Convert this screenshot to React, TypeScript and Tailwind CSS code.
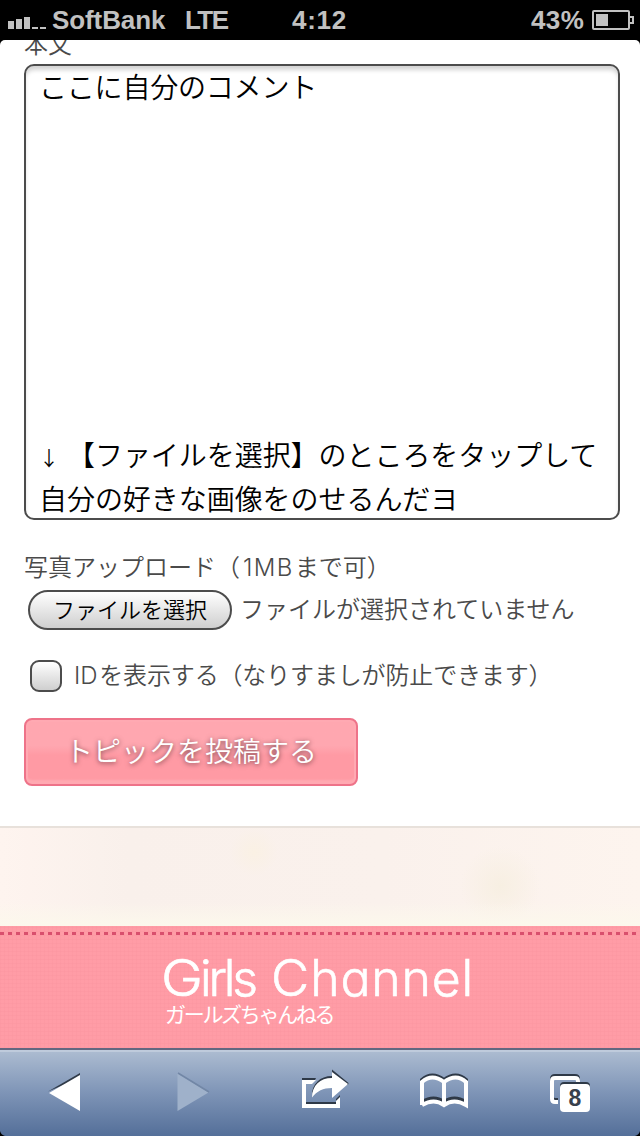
import React from "react";

const JP = "font-['Noto_Sans_CJK_JP',sans-serif]";

function StatusBar() {
  return (
    <header className="flex h-10 shrink-0 items-center bg-black pl-2 pr-1.5 font-['Liberation_Sans',sans-serif] text-[26px] font-bold leading-8 text-[#c1c1c1]">
      <svg width="40" height="20" viewBox="0 0 40 20" fill="#c1c1c1" className="shrink-0">
        <rect x="0" y="11" width="6" height="8" />
        <rect x="8" y="9" width="6" height="10" />
        <rect x="16" y="7" width="6" height="12" />
        <rect x="24" y="17" width="6" height="2" />
        <rect x="32" y="17" width="6" height="2" />
      </svg>
      <span className="ml-1 w-[133px] whitespace-nowrap tracking-[-0.1px]">SoftBank</span>
      <span className="w-[107px] whitespace-nowrap tracking-[-1.6px]">LTE</span>
      <span className="w-[239px] whitespace-nowrap tracking-[0.7px]">4:12</span>
      <span className="w-[61px] whitespace-nowrap tracking-[0.4px]">43%</span>
      <svg width="42" height="20" viewBox="0 0 42 20" fill="none" stroke="#c1c1c1" strokeWidth="2" className="shrink-0">
        <rect x="1" y="1" width="36" height="18" rx="1" />
        <path d="M38 7h3v6h-3" />
        <rect x="4" y="4" width="12" height="12" fill="#c1c1c1" stroke="none" />
      </svg>
    </header>
  );
}

function TopicForm() {
  return (
    <main className={`h-[786px] shrink-0 overflow-hidden rounded-t-[5px] bg-white px-6 font-[350] text-[#4a4a4a] ${JP}`}>
      <div className="-mt-[9px] h-[33px] text-2xl leading-6">本文</div>
      <div className="flex h-[456px] w-[596px] flex-col justify-between rounded-[10px] border-2 border-[#4c4c4c] bg-white pl-[13px] text-[28px] leading-[44px] text-black shadow-[inset_0_5px_4px_-1px_#d4d4d4]">
        <div className="-mt-[2px] whitespace-nowrap tracking-[-0.2px]">ここに自分のコメント</div>
        <div className="-mb-[2px] whitespace-nowrap tracking-[-0.05px]">
          <div className="flex h-11">
            <span className="w-7 shrink-0 pt-1 text-[20px]">↓</span>
            <span>【ファイルを選択】のところをタップして</span>
          </div>
          <div>自分の好きな画像をのせるんだヨ</div>
        </div>
      </div>
      <div className="mt-[34px] h-9 whitespace-nowrap text-2xl leading-6">
        写真アップロード（<span className="ml-[3px] mr-px font-['Inter',sans-serif] font-light tracking-[1.4px]">1MB</span>まで可）
      </div>
      <div className="flex h-10 items-center pl-1">
        <button className="flex h-10 w-[204px] items-start justify-center whitespace-nowrap rounded-full border-2 border-[#4c4c4c] bg-linear-to-b from-white to-[#cfcfcf] text-[22px] font-[350] leading-[33px] text-black">
          ファイルを選択
        </button>
        <span className="ml-2 whitespace-nowrap pb-1 text-2xl leading-8">ファイルが選択されていません</span>
      </div>
      <label className="mt-[30px] flex h-8 items-center pl-1.5">
        <span className="h-8 w-8 rounded-[9px] border-2 border-[#4c4c4c] bg-linear-to-b from-white to-[#cfcfcf]" />
        <span className="ml-3 whitespace-nowrap pb-0.5 text-2xl leading-8 tracking-[-0.15px]">
          <span className="mr-0.5 font-['Inter',sans-serif] font-light">ID</span>を表示する（なりすましが防止できます）
        </span>
      </label>
      <button className="mt-[26px] flex h-[68px] w-[334px] items-start justify-center whitespace-nowrap rounded-lg border-2 border-[#ee7389] bg-linear-to-b from-[#ffa7b0] from-40% to-[#ff9aa4] to-55% text-[28px] font-[350] leading-[60px] text-white shadow-[inset_0_0_0_2px_#ffa9b2,inset_0_-4px_2px_#ffaab2] [text-shadow:0_1px_5px_#704048]">
        トピックを投稿する
      </button>
    </main>
  );
}

function Brand() {
  return (
    <footer className="flex h-[122px] shrink-0 flex-col bg-[#ff9ca6] bg-[repeating-linear-gradient(0deg,#f58c9830_0_1px,transparent_1px_4px),repeating-linear-gradient(90deg,#f58c9828_0_1px,transparent_1px_4px)] pt-1.5 text-white">
      <div className="h-[3px] shrink-0 bg-[repeating-linear-gradient(90deg,#d94f6d_0_4px,transparent_4px_8px)]" />
      <div className="ml-[161px] mt-5 flex h-[46px] whitespace-nowrap font-['Inter',sans-serif] text-[50px] font-light leading-[46px] [-webkit-text-stroke:0.6px_white] [font-feature-settings:'cv11']">
        <span className="w-[110px] tracking-[-3.2px]">
          <span className="mr-[5px] inline-block origin-left scale-x-[1.13]">G</span>irls
        </span>
        <span className="tracking-[0.8px]">
          <span className="mr-0.5 inline-block origin-left scale-x-105">C</span>hannel
        </span>
      </div>
      <div className={`ml-[165px] whitespace-nowrap text-[21px] leading-6 tracking-[-2.3px] ${JP}`}>ガールズちゃんねる</div>
    </footer>
  );
}

function Toolbar() {
  return (
    <nav className="h-[88px] shrink-0 bg-linear-to-b from-[#b0bfd3] via-[#7f95b7] to-[#546f99]">
      <svg width="640" height="88" viewBox="0 0 640 88" fill="none">
        <path d="M0 0h640v2H0z" fill="#636780" />
        <path d="M0 2h640v2H0z" fill="#bfcbdc" />
        <path d="M48 43.500L80 25V30z" fill="#303a48" />
        <path d="M49 45L80 27v36z" fill="#fff" />
        <path d="M177.500 25.500L208.500 44.500 177.500 63z" fill="#9fb1ca" />
        <path d="M178 25L209 44" stroke="#7287a6" strokeWidth="1.500" />
        <g>
          <path d="M302 30h14l-1 2h-13zM306 54h30v2h-30zM336 51l4-4v3l-4 3z" fill="#2e3947" />
          <path d="M332 21.500L348.500 35l-.5 2-16-11zM332 28c-12 0-20 8-20 19v3c0-11 8-19 20-19z" fill="#2e3947" />
          <path d="M302 32h14l-4 4h-6v20h30v-3l4-4v11h-38z" fill="#fff" />
          <path d="M332 24l16 12-16 14V40c-9 0-15 3-20 9.500 0-12 8-19.500 20-19.500z" fill="#fff" />
        </g>
        <g strokeWidth="4">
          <path d="M422 56V34q10-9 22 0q12-9 22 0V56q-12-7-22 0q-10-7-22 0M444 34v22" stroke="#2e3947" transform="translate(0 -2)" />
          <path d="M422 57V34q10-9 22 0q12-9 22 0V57q-12-7-22 0q-10-7-22 0M444 34v22" stroke="#fff" />
        </g>
        <path d="M578 34V31q0-3-3-3H555q-3 0-3 3V49q0 3 3 3h3" stroke="#2e3947" strokeWidth="4" />
        <path d="M578 34V33q0-3-3-3H555q-3 0-3 3V51q0 3 3 3h3" stroke="#fff" strokeWidth="4" />
        <rect x="560" y="34" width="30" height="28" rx="4" fill="#2e3947" />
        <rect x="560" y="36" width="30" height="28" rx="4" fill="#fff" />
        <text x="575" y="58" textAnchor="middle" fontFamily="Liberation Sans, sans-serif" fontWeight="700" fontSize="23" fill="#38404c">8</text>
        <path d="M0 83q1 4 5 5H0zM640 83q-1 4-5 5h5z" fill="#000" />
      </svg>
    </nav>
  );
}

export default function App() {
  return (
    <div className="flex h-[1136px] w-[640px] flex-col overflow-hidden bg-black">
      <StatusBar />
      <TopicForm />
      <div className="h-[100px] shrink-0 border-t-2 border-[#e8e1db] bg-[#fbf2ec] bg-[linear-gradient(0deg,#fcf8ec,transparent_24px),radial-gradient(circle_at_500px_58px,#f7efe2,transparent_40px),radial-gradient(circle_at_254px_24px,#faf1e4,transparent_24px),linear-gradient(90deg,#fef4ef,#f9f0eb_20%,#faf1ec_60%,#fdf4ee)]" />
      <Brand />
      <Toolbar />
    </div>
  );
}
